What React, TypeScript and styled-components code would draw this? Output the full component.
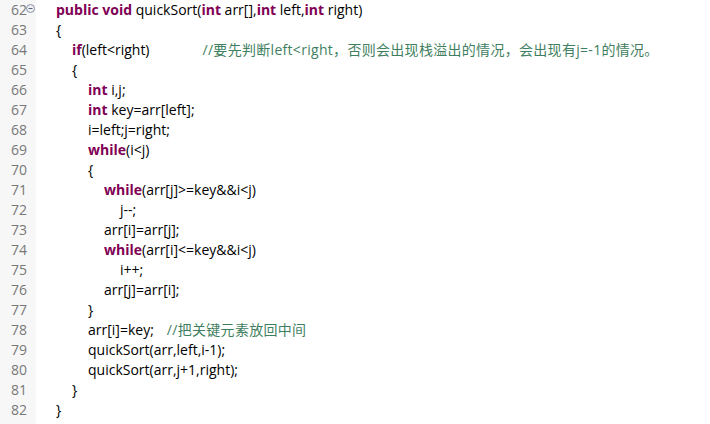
import React from "react";
import styled, { createGlobalStyle } from "styled-components";

const Global = createGlobalStyle`
  html, body { margin: 0; padding: 0; background: #ffffff; }
  #root { height: 100vh; }
`;

const Editor = styled.div`
  display: grid;
  grid-template-columns: 36px 1fr;
  height: 424px;
  background: #ffffff;
  font-family: "Open Sans", "Noto Sans CJK SC", sans-serif;
  font-size: 14px;
  font-variant-ligatures: none;
  overflow: hidden;
`;

const Gutter = styled.div`
  background: #f7f7f7;
  display: flex;
  flex-direction: column;
`;

const LineNo = styled.div`
  height: 20px;
  line-height: 20px;
  display: flex;
  align-items: center;
  justify-content: flex-end;
  padding-right: 9px;
  position: relative;
  color: #787878;
  font-size: 14px;
`;

const Fold = styled.svg`
  position: absolute;
  right: 1px;
  top: 4px;
`;

const Code = styled.div`
  display: flex;
  flex-direction: column;
  padding-left: 20px;
`;

const Line = styled.div<{ $indent: number }>`
  height: 20px;
  line-height: 20px;
  padding-left: ${(p) => p.$indent * 16}px;
  white-space: pre;
  color: #000000;
`;

const Kw = styled.span`
  color: #7f0055;
  font-weight: bold;
`;

const Comment = styled.span<{ $at: number }>`
  color: #3f7f5f;
  margin-left: ${(p) => p.$at}px;
  letter-spacing: 0.3px;
`;

type Row = { n: number; indent: number; content: React.ReactNode };

const rows: Row[] = [
  {
    n: 62,
    indent: 0,
    content: (
      <>
        <Kw>public</Kw> <Kw>void</Kw> quickSort(<Kw>int</Kw> arr[],<Kw>int</Kw> left,<Kw>int</Kw> right)
      </>
    ),
  },
  { n: 63, indent: 0, content: "{" },
  {
    n: 64,
    indent: 1,
    content: (
      <>
        <Kw>if</Kw>(left&lt;right)
        <Comment $at={53}>//要先判断left&lt;right，否则会出现栈溢出的情况，会出现有j=-1的情况。</Comment>
      </>
    ),
  },
  { n: 65, indent: 1, content: "{" },
  { n: 66, indent: 2, content: (<><Kw>int</Kw> i,j;</>) },
  { n: 67, indent: 2, content: (<><Kw>int</Kw> key=arr[left];</>) },
  { n: 68, indent: 2, content: "i=left;j=right;" },
  { n: 69, indent: 2, content: (<><Kw>while</Kw>(i&lt;j)</>) },
  { n: 70, indent: 2, content: "{" },
  { n: 71, indent: 3, content: (<><Kw>while</Kw>(arr[j]&gt;=key&amp;&amp;i&lt;j)</>) },
  { n: 72, indent: 4, content: "j--;" },
  { n: 73, indent: 3, content: "arr[i]=arr[j];" },
  { n: 74, indent: 3, content: (<><Kw>while</Kw>(arr[i]&lt;=key&amp;&amp;i&lt;j)</>) },
  { n: 75, indent: 4, content: "i++;" },
  { n: 76, indent: 3, content: "arr[j]=arr[i];" },
  { n: 77, indent: 2, content: "}" },
  {
    n: 78,
    indent: 2,
    content: (
      <>
        arr[i]=key;<Comment $at={13}>//把关键元素放回中间</Comment>
      </>
    ),
  },
  { n: 79, indent: 2, content: "quickSort(arr,left,i-1);" },
  { n: 80, indent: 2, content: "quickSort(arr,j+1,right);" },
  { n: 81, indent: 1, content: "}" },
  { n: 82, indent: 0, content: "}" },
];

export default function App() {
  return (
    <>
      <Global />
      <Editor>
        <Gutter>
          {rows.map((r) => (
            <LineNo key={r.n}>
              {r.n}
              {r.n === 62 && (
                <Fold width="9" height="9" viewBox="0 0 9 9">
                  <circle cx="4.5" cy="4.5" r="4" fill="#eef0f4" stroke="#8a93a6" strokeWidth="1" />
                  <line x1="2.5" y1="4.5" x2="6.5" y2="4.5" stroke="#5a6378" strokeWidth="1" />
                </Fold>
              )}
            </LineNo>
          ))}
        </Gutter>
        <Code>
          {rows.map((r) => (
            <Line key={r.n} $indent={r.indent}>
              {r.content}
            </Line>
          ))}
        </Code>
      </Editor>
    </>
  );
}
